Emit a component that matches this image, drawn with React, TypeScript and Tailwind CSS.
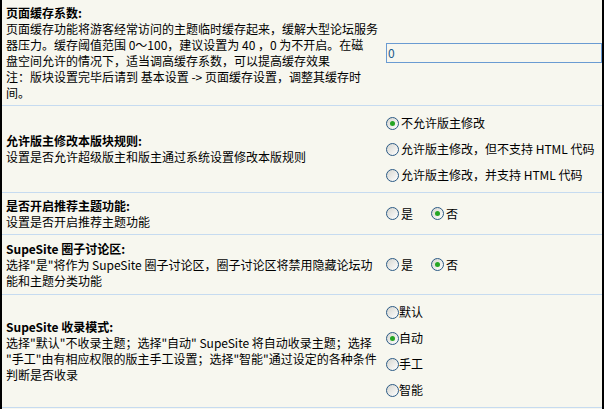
import React from "react";

const Radio = ({ checked }: { checked?: boolean }) => (
  <span className="inline-flex h-[13px] w-[13px] shrink-0 items-center justify-center rounded-full border border-[#2b5a85] bg-linear-to-br from-[#d6d6d0] to-white">
    {checked ? <span className="h-[5px] w-[5px] rounded-full bg-[#24a524]" /> : null}
  </span>
);

const Opt = ({ label, checked, gap = true }: { label: string; checked?: boolean; gap?: boolean }) => (
  <label className="flex items-center">
    <Radio checked={checked} />
    <span className={gap ? "ml-[2px]" : ""}>{label}</span>
  </label>
);

const Left = ({ title, lines }: { title: string; lines: string[] }) => (
  <div className="flex w-[381px] shrink-0 flex-col justify-center pl-[4px]">
    <div className="whitespace-nowrap font-bold">{title}</div>
    {lines.map((l, i) => (
      <div key={i} className="whitespace-nowrap">
        {l}
      </div>
    ))}
  </div>
);

export default function App() {
  return (
    <div
      className="h-[409px] w-[604px] overflow-hidden border-x-2 border-black bg-[#f7f7ef] text-[12px] leading-[16px] text-black"
      style={{ fontFamily: '"Noto Sans CJK SC", "Liberation Sans", sans-serif' }}
    >
      <div className="flex h-[106px] border-b border-[#c6dbf0]">
        <Left
          title="页面缓存系数:"
          lines={[
            "页面缓存功能将游客经常访问的主题临时缓存起来，缓解大型论坛服务",
            "器压力。缓存阈值范围 0～100，建议设置为 40 ，0 为不开启。在磁",
            "盘空间允许的情况下，适当调高缓存系数，可以提高缓存效果",
            "注：版块设置完毕后请到 基本设置 -> 页面缓存设置，调整其缓存时",
            "间。",
          ]}
        />
        <div className="flex flex-1 items-center pl-[3px]">
          <input
            defaultValue="0"
            className="h-[20px] w-full border border-[#6a9bd2] bg-[#f7f7ef] px-[1px] text-[12px] text-[#1a5a8a] outline-none"
            style={{ fontFamily: '"Noto Sans CJK SC", "Liberation Sans", sans-serif' }}
          />
        </div>
      </div>

      <div className="flex h-[87px] border-b border-[#c6dbf0]">
        <Left title="允许版主修改本版块规则:" lines={["设置是否允许超级版主和版主通过系统设置修改本版规则"]} />
        <div className="flex flex-1 flex-col justify-center gap-[10px] pl-[3px]">
          <Opt label="不允许版主修改" checked />
          <Opt label="允许版主修改，但不支持 HTML 代码" />
          <Opt label="允许版主修改，并支持 HTML 代码" />
        </div>
      </div>

      <div className="flex h-[42px] border-b border-[#c6dbf0]">
        <Left title="是否开启推荐主题功能:" lines={["设置是否开启推荐主题功能"]} />
        <div className="flex flex-1 items-center gap-[18px] pl-[3px]">
          <Opt label="是" />
          <Opt label="否" checked />
        </div>
      </div>

      <div className="flex h-[60px] border-b border-[#c6dbf0]">
        <Left
          title="SupeSite 圈子讨论区:"
          lines={["选择\"是\"将作为 SupeSite 圈子讨论区，圈子讨论区将禁用隐藏论坛功", "能和主题分类功能"]}
        />
        <div className="flex flex-1 items-center gap-[18px] pl-[3px]">
          <Opt label="是" />
          <Opt label="否" checked />
        </div>
      </div>

      <div className="flex h-[113px] border-b border-[#c6dbf0]">
        <Left
          title="SupeSite 收录模式:"
          lines={[
            "选择\"默认\"不收录主题；选择\"自动\" SupeSite 将自动收录主题；选择",
            "\"手工\"由有相应权限的版主手工设置；选择\"智能\"通过设定的各种条件",
            "判断是否收录",
          ]}
        />
        <div className="flex flex-1 flex-col justify-center gap-[10px] pl-[3px]">
          <Opt label="默认" gap={false} />
          <Opt label="自动" checked gap={false} />
          <Opt label="手工" gap={false} />
          <Opt label="智能" gap={false} />
        </div>
      </div>
    </div>
  );
}
